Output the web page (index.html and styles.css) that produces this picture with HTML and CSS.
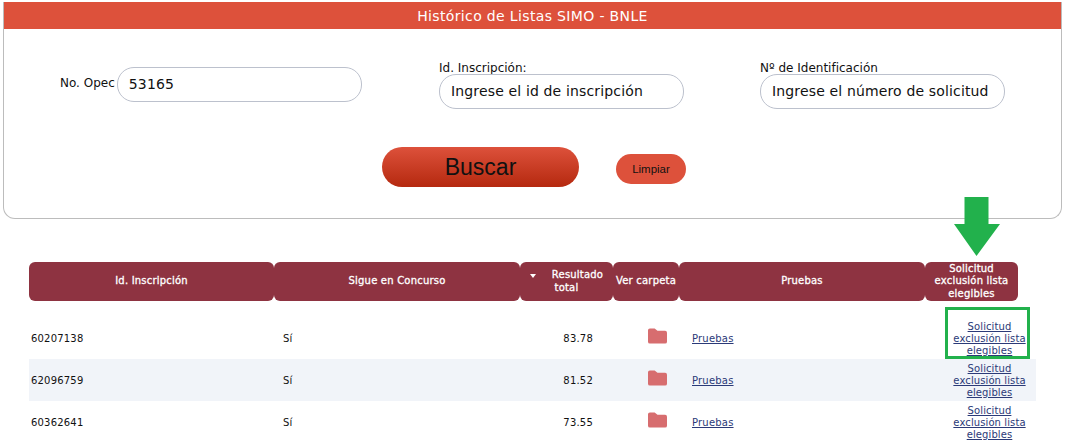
FILE: index.html
```html
<!DOCTYPE html>
<html lang="es">
<head>
<meta charset="utf-8">
<title>Histórico de Listas SIMO - BNLE</title>
<link rel="stylesheet" href="styles.css">
</head>
<body>
<section class="panel">
  <h1 class="panel-title">Histórico de Listas SIMO - BNLE</h1>
  <form class="fields">
    <div class="field field-inline">
      <label class="label" for="opec">No. Opec</label>
      <input class="input" id="opec" value="53165">
    </div>
    <div class="field">
      <label class="label" for="ins">Id. Inscripción:</label>
      <input class="input" id="ins" placeholder="Ingrese el id de inscripción">
    </div>
    <div class="field">
      <label class="label" for="sol">Nº de Identificación</label>
      <input class="input" id="sol" placeholder="Ingrese el número de solicitud">
    </div>
  </form>
  <div class="actions">
    <button class="btn-search" type="button">Buscar</button>
    <button class="btn-clear" type="button">Limpiar</button>
  </div>
</section>

<section class="results">
  <div class="head">
    <div class="th">Id. Inscripción</div>
    <div class="th">Sigue en Concurso</div>
    <div class="th"><span class="th-sort"><span class="sort"></span>Resultado total</span></div>
    <div class="th th-tight">Ver carpeta</div>
    <div class="th">Pruebas</div>
    <div class="th">Solicitud exclusión lista elegibles</div>
  </div>
  <div class="row row-first">
    <div class="td">60207138</div>
    <div class="td td-si">Sí</div>
    <div class="td td-num">83.78</div>
    <div class="td td-folder"><svg class="folder" viewBox="0 0 20 16"><path d="M0 2a2 2 0 0 1 2-2h5l3 2.500h8a2 2 0 0 1 2 2V14a2 2 0 0 1-2 2H2a2 2 0 0 1-2-2z"/></svg></div>
    <div class="td td-test"><a href="#">Pruebas</a></div>
    <div class="td td-link"><a href="#">Solicitud exclusión lista elegibles</a></div>
  </div>
  <div class="row row-alt">
    <div class="td">62096759</div>
    <div class="td td-si">Sí</div>
    <div class="td td-num">81.52</div>
    <div class="td td-folder"><svg class="folder" viewBox="0 0 20 16"><path d="M0 2a2 2 0 0 1 2-2h5l3 2.500h8a2 2 0 0 1 2 2V14a2 2 0 0 1-2 2H2a2 2 0 0 1-2-2z"/></svg></div>
    <div class="td td-test"><a href="#">Pruebas</a></div>
    <div class="td td-link"><a href="#">Solicitud exclusión lista elegibles</a></div>
  </div>
  <div class="row">
    <div class="td">60362641</div>
    <div class="td td-si">Sí</div>
    <div class="td td-num">73.55</div>
    <div class="td td-folder"><svg class="folder" viewBox="0 0 20 16"><path d="M0 2a2 2 0 0 1 2-2h5l3 2.500h8a2 2 0 0 1 2 2V14a2 2 0 0 1-2 2H2a2 2 0 0 1-2-2z"/></svg></div>
    <div class="td td-test"><a href="#">Pruebas</a></div>
    <div class="td td-link"><a href="#">Solicitud exclusión lista elegibles</a></div>
  </div>
</section>

<svg class="arrow" viewBox="0 0 46 59"><path d="M10.500 0H34.500V27H46L22.500 59L0 27H10.500z"/></svg>
<div class="highlight"></div>
</body>
</html>
```

FILE: styles.css
```css
* { box-sizing: border-box; }
html, body { margin: 0; padding: 0; }
body {
  position: relative;
  width: 1066px;
  height: 444px;
  overflow: hidden;
  background: #fff;
  color: #111;
  font-family: "DejaVu Sans", Verdana, sans-serif;
  font-size: 10px;
  padding-top: 2px;
}
.panel {
  width: 1059px;
  height: 217px;
  margin-left: 3px;
  border: 1px solid #bcbcbc;
  border-top: 0;
  border-radius: 0 0 12px 12px;
}
.panel-title {
  margin: 0;
  height: 27px;
  background: #dd513b;
  color: #fff;
  font-size: 14px;
  font-weight: 400;
  line-height: 28px;
  text-align: center;
  letter-spacing: 0.35px;
}
.fields {
  display: flex;
  gap: 76px;
  padding: 33px 0 0 56px;
  height: 118px;
}
.field { display: flex; flex-direction: column; width: 245px; margin-left: 1px; }
.field + .field { margin-left: 0; }
.field-inline {
  flex-direction: row;
  align-items: center;
  gap: 2px;
  width: 302px;
  height: 35px;
  margin: 5px 0 0;
}
.field:nth-child(2) { margin-left: 1px; }
.label { font-size: 12px; line-height: 12px; color: #111; white-space: nowrap; }
.field-inline .label { margin-top: -3px; }
.input {
  flex: none;
  width: 245px;
  height: 35px;
  padding: 0 11px 2px;
  border: 1px solid #bcc1cd;
  border-radius: 17px;
  background: #fff;
  color: #111;
  font-family: inherit;
  font-size: 14px;
  letter-spacing: 0.15px;
  outline: 0;
}
.input::placeholder { color: #111; opacity: 1; }
.actions {
  display: flex;
  align-items: center;
  gap: 37px;
  padding-left: 378px;
}
.btn-search, .btn-clear {
  border: 0;
  padding: 0;
  font-family: "Liberation Sans", Arial, sans-serif;
  color: #111;
}
.btn-search {
  width: 197px;
  height: 40px;
  border-radius: 20px;
  background: linear-gradient(#dd513b, #b5290f);
  font-size: 23px;
}
.btn-clear {
  width: 70px;
  height: 30px;
  margin-top: 4px;
  border-radius: 15px;
  background: #dd513b;
  font-size: 11.500px;
}
.results { margin: 43px 0 0 29px; width: 1007px; }
.head, .row {
  display: grid;
  grid-template-columns: 245px 246px 93px 66px 246px 111px;
}
.head { grid-template-columns: 245px 246px 93px 66px 246px 93px; height: 39px; }
.th {
  display: flex;
  align-items: center;
  justify-content: center;
  padding: 0 3px;
  background: #8e3341;
  border-radius: 6px;
  color: #fff;
  font-size: 10px;
  font-weight: 400;
  line-height: 12.300px;
  text-align: center;
  letter-spacing: 0.2px;
  -webkit-text-stroke: 0.3px #fff;
}
.th-tight { padding: 0; white-space: nowrap; }
.th-sort { display: block; width: 80px; }
.sort {
  display: inline-block;
  width: 0;
  height: 0;
  margin-right: 16px;
  vertical-align: 0;
  border: 3.500px solid transparent;
  border-top: 4px solid #fff;
  border-bottom: 0;
}
.row { height: 42px; align-items: center; font-size: 10px; line-height: 12px; }
.row-first { height: 58px; padding-top: 16px; }
.row-alt { background: #f1f4f9; }
.td { padding: 2px 0 0 2px; letter-spacing: 0.2px; }
.td-si { padding-left: 9px; }
.td-num { text-align: right; padding-right: 20px; }
.td-folder { display: flex; justify-content: center; padding: 0 1px 0 23px; margin-top: -4px; }
.td-test { padding-left: 13px; }
.td-link { padding-left: 23px; padding-right: 5px; text-align: center; line-height: 12.300px; letter-spacing: 0.1px; }
.td a { color: #2b3a78; }
.folder { display: block; width: 19px; height: 16px; fill: #d76d6f; }
.arrow { position: absolute; left: 954px; top: 197px; width: 46px; height: 59px; fill: #22b14c; }
.highlight {
  position: absolute;
  left: 945px;
  top: 307px;
  width: 85px;
  height: 52px;
  border: 3px solid #22b14c;
}
```
